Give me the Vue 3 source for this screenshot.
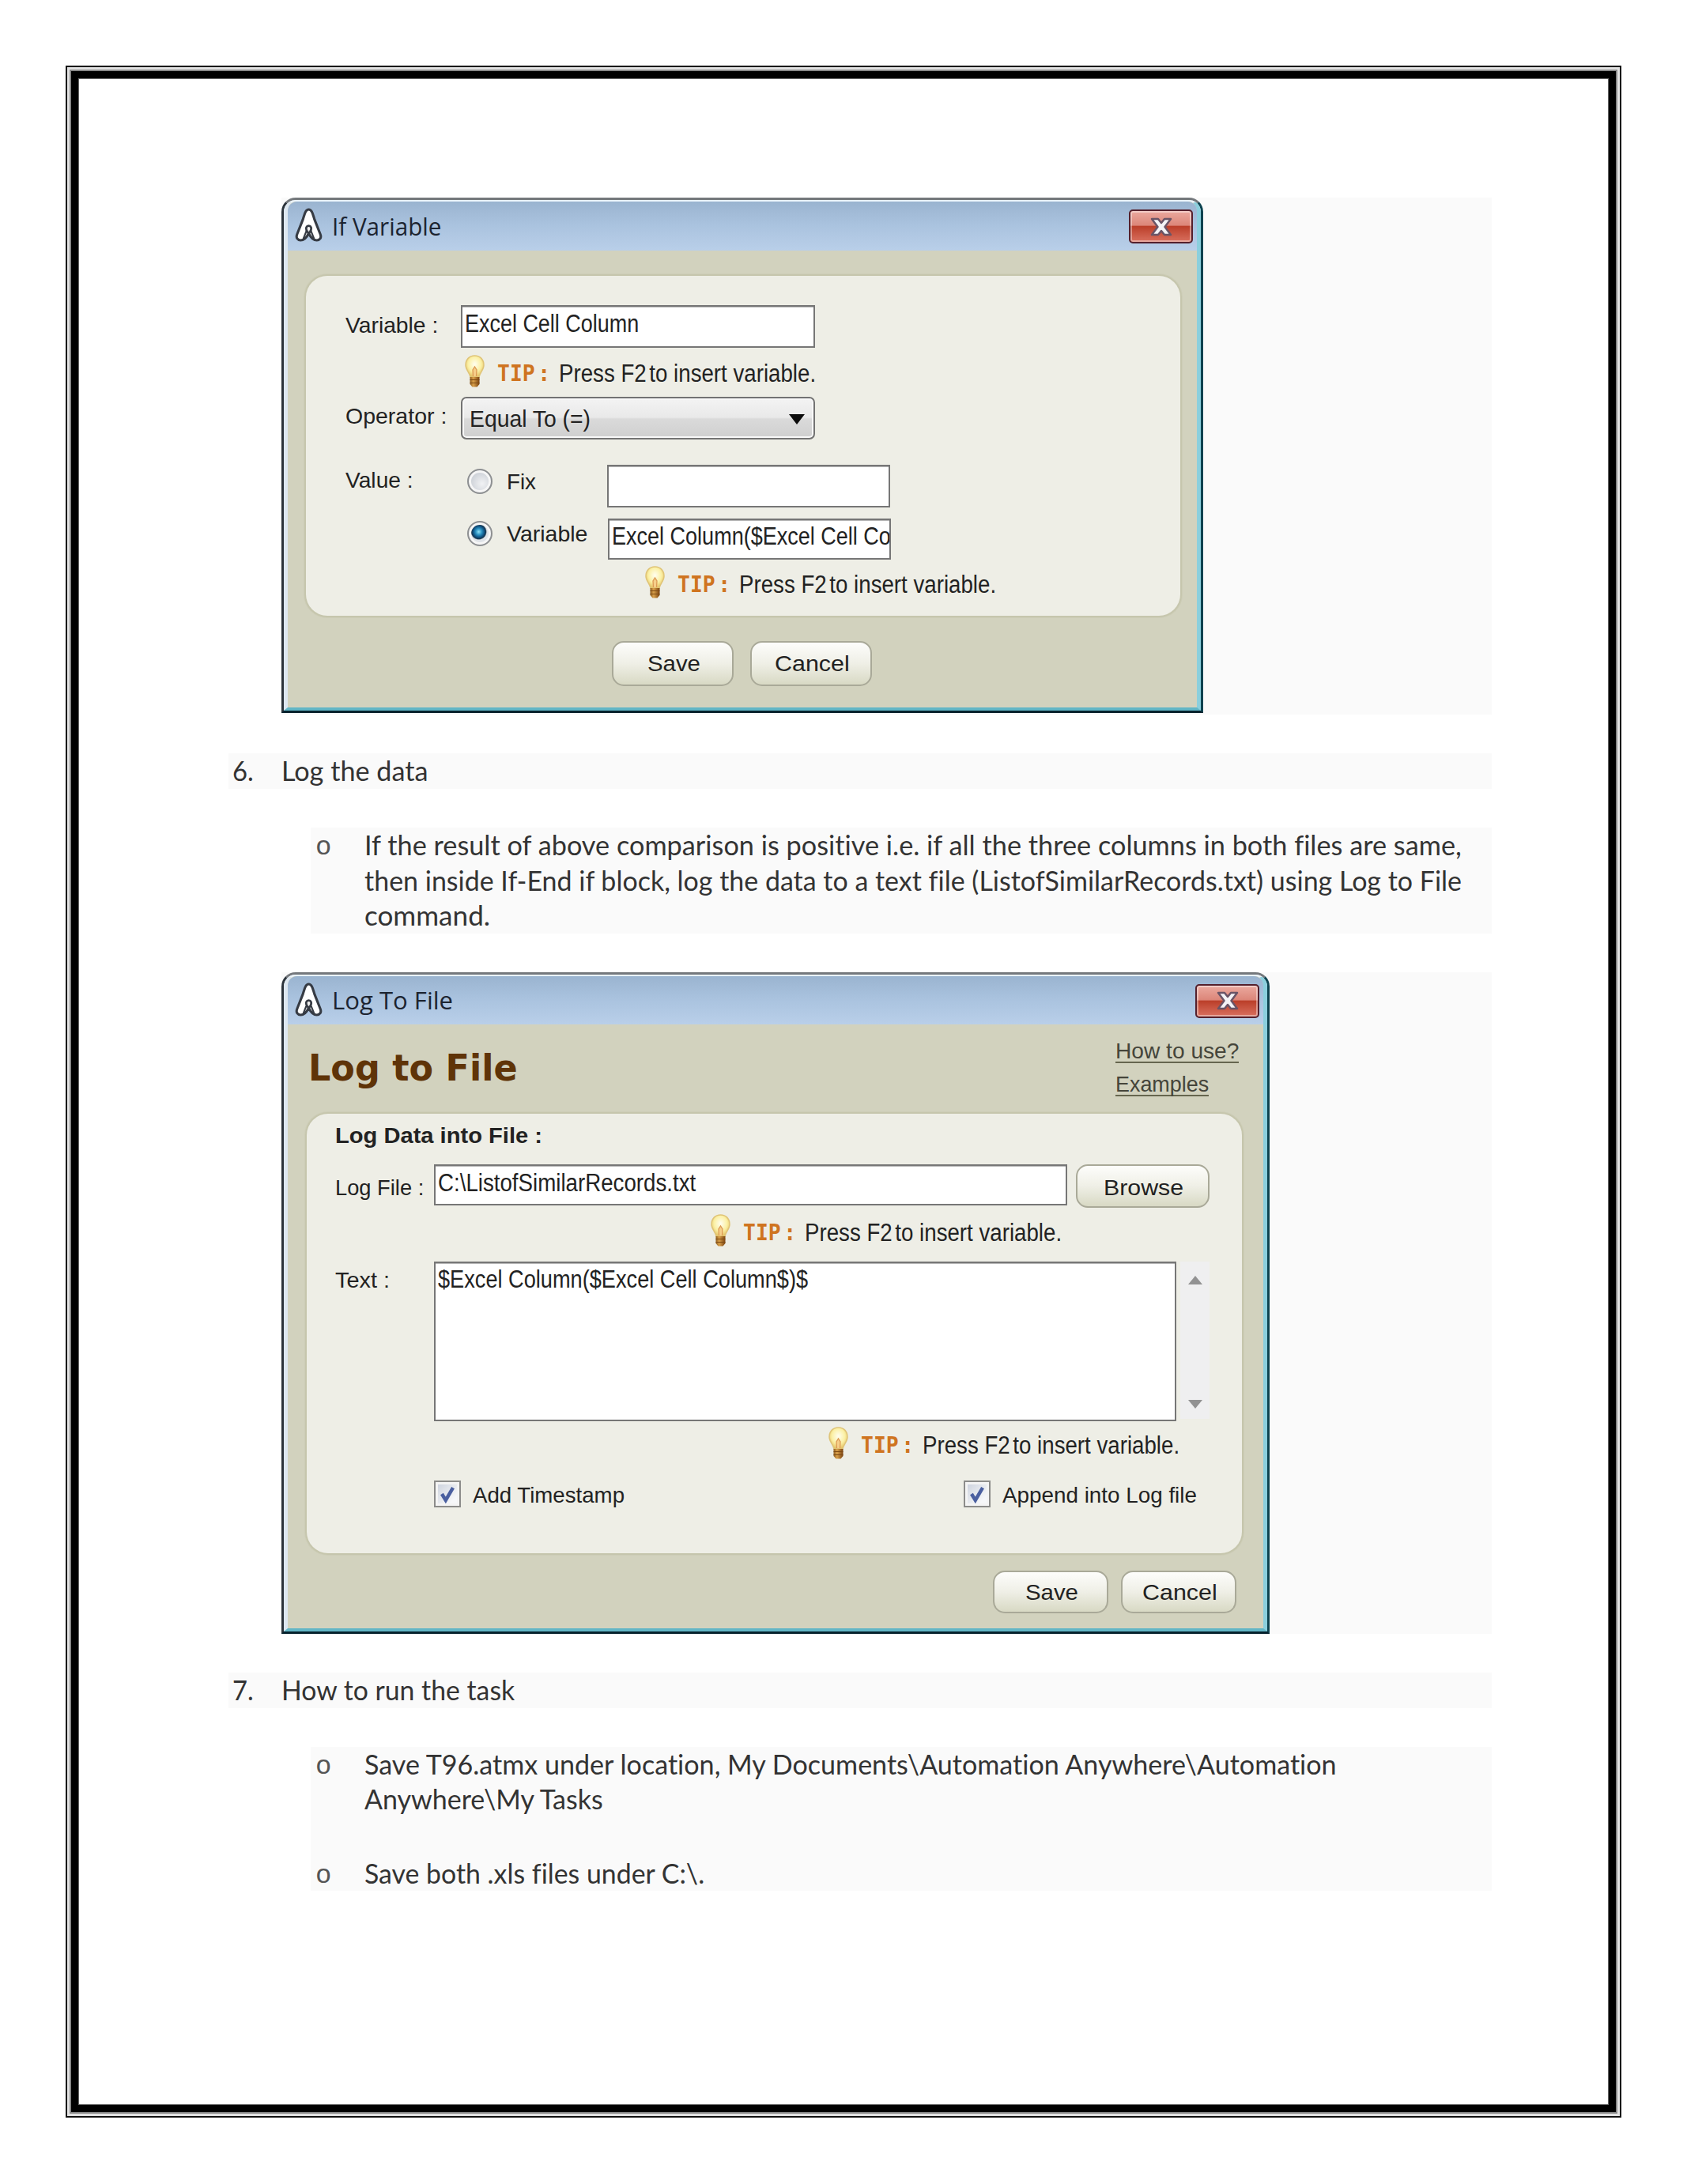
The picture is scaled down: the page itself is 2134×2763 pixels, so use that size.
<script setup>
// Condenses or widens a run of text to the given width in pixels.
const vFit = {
  mounted(el, { value }) {
    const natural = el.offsetWidth
    el.style.transform = `scaleX(${value / natural})`
    el.style.marginRight = `${value - natural}px`
  },
}
</script>

<template>
  <div class="page">
    <svg class="defs" width="0" height="0">
      <defs>
        <radialGradient id="glow" cx="50%" cy="40%" r="60%">
          <stop offset="0" stop-color="#fffef0" />
          <stop offset="0.6" stop-color="#fbf0a4" />
          <stop offset="1" stop-color="#e3bf62" />
        </radialGradient>
        <linearGradient id="base" x1="0" x2="1" y1="0" y2="0">
          <stop offset="0" stop-color="#8d5a1c" />
          <stop offset="0.35" stop-color="#d9a04a" />
          <stop offset="1" stop-color="#7a420e" />
        </linearGradient>
      </defs>
      <symbol id="bulb" viewBox="0 0 25 41">
        <path d="M12.5 1C5.5 1 1 6 1 13c0 6 5 9 6 15h11c1-6 6-9 6-15C24 6 19.500 1 12.500 1Z" fill="url(#glow)" stroke="#dfc477" stroke-width="1.500" />
        <path d="M10.500 27 10 19l2.500-4 2.500 4-.5 8" fill="#f6cf8a" stroke="#dc9a55" stroke-width="1.300" />
        <path d="M6.500 28h12v9l-3 3.500h-6l-3-3.500Z" fill="url(#base)" />
        <path d="M6.500 31.500h12M6.500 35.500h12" stroke="#7d4a14" stroke-width="1.200" />
      </symbol>
      <symbol id="logo" viewBox="0 0 34 44">
        <path d="M17 2C13 2 12 7 9.500 15L2 34c-2 5 1 8 4.500 8 5 0 8-4 10.500-9 2.500 5 5.500 9 10.500 9 3.500 0 6.500-3 4.500-8l-7.500-19C22 7 21 2 17 2Z" fill="#fff" stroke="#363b44" stroke-width="3.200" />
        <path d="M17 33c-3-3-4-5-3-8 1-2.500 5-2.500 6 0 1 3 0 5-3 8Z" fill="#eee" stroke="#363b44" stroke-width="2.800" />
        <path d="m14 30-4 10M20 30l4 10" stroke="#363b44" stroke-width="2.200" />
      </symbol>
      <symbol id="cross" viewBox="0 0 28 24">
        <path d="M2 2h8l4 5 4-5h8l-7.500 10L26 22h-8l-4-5-4 5H2l7.500-10Z" fill="#f3f3f6" stroke="#6a5466" stroke-width="2.500" stroke-linejoin="round" />
      </symbol>
      <symbol id="check" viewBox="0 0 34 34">
        <path d="m9 17 5.500 9L25 8" fill="none" stroke="#4a5fa0" stroke-width="5" />
      </symbol>
    </svg>

    <div class="frame">
      <main class="sheet">
        <section class="figure first">
          <div class="dialog small">
            <div class="chrome">
              <header class="titlebar">
                <svg class="logo"><use href="#logo" /></svg>
                <span v-fit="138" class="t title">If Variable</span>
                <button class="close"><svg width="28" height="24"><use href="#cross" /></svg></button>
              </header>
              <div class="panel panel-a">
                <div class="row ra">
                  <span v-fit="117" class="t label">Variable :</span>
                  <div class="field fa"><span v-fit="220" class="t value">Excel Cell Column</span></div>
                </div>
                <div class="row rb tip">
                  <svg class="bulb"><use href="#bulb" /></svg>
                  <span v-fit="67" class="t mark">TIP :</span>
                  <span v-fit="325" class="t hint">Press F2<i />to insert variable.</span>
                </div>
                <div class="row rc">
                  <span v-fit="128" class="t label">Operator :</span>
                  <div class="select">
                    <span v-fit="153" class="t">Equal To (=)</span>
                    <svg class="arrow" viewBox="0 0 20 13"><path d="M0 0h20L10 13Z" fill="#0c0c0c" /></svg>
                  </div>
                </div>
                <div class="row rd">
                  <span v-fit="86" class="t label">Value :</span>
                  <span class="radio" />
                  <span v-fit="37" class="t option">Fix</span>
                  <div class="field fd" />
                </div>
                <div class="row re">
                  <span class="radio on" />
                  <span v-fit="102" class="t option">Variable</span>
                  <div class="field fe"><span v-fit="353" class="t value">Excel Column($Excel Cell Co</span></div>
                </div>
                <div class="row rf tip">
                  <svg class="bulb"><use href="#bulb" /></svg>
                  <span v-fit="67" class="t mark">TIP :</span>
                  <span v-fit="325" class="t hint">Press F2<i />to insert variable.</span>
                </div>
              </div>
              <footer class="actions actions-a">
                <button class="btn"><span v-fit="67" class="t">Save</span></button>
                <button class="btn"><span v-fit="95" class="t">Cancel</span></button>
              </footer>
            </div>
          </div>
        </section>

        <div class="item">
          <span v-fit="27" class="t num">6.</span><span v-fit="185" class="t">Log the data</span>
        </div>
        <div class="sub">
          <span class="bullet">o</span>
          <div class="lines">
            <span v-fit="1388" class="t">If the result of above comparison is positive i.e. if all the three columns in both files are same,</span>
            <span v-fit="1388" class="t">then inside If-End if block, log the data to a text file (ListofSimilarRecords.txt) using Log to File</span>
            <span v-fit="159" class="t">command.</span>
          </div>
        </div>

        <section class="figure second">
          <div class="dialog large">
            <div class="chrome">
              <header class="titlebar low">
                <svg class="logo"><use href="#logo" /></svg>
                <span v-fit="153" class="t title">Log To File</span>
                <button class="close"><svg width="28" height="24"><use href="#cross" /></svg></button>
              </header>
              <div class="head">
                <h1 v-fit="265" class="t">Log to File</h1>
                <nav class="links">
                  <a v-fit="156" class="t">How to use?</a>
                  <a v-fit="118" class="t">Examples</a>
                </nav>
              </div>
              <div class="panel panel-b">
                <div class="row sa"><span v-fit="262" class="t label strong">Log Data into File :</span></div>
                <div class="row sb">
                  <span v-fit="112" class="t label">Log File :</span>
                  <div class="field gb"><span v-fit="326" class="t value">C:\ListofSimilarRecords.txt</span></div>
                  <button class="btn browse"><span v-fit="101" class="t">Browse</span></button>
                </div>
                <div class="row sc tip">
                  <svg class="bulb"><use href="#bulb" /></svg>
                  <span v-fit="67" class="t mark">TIP :</span>
                  <span v-fit="325" class="t hint">Press F2<i />to insert variable.</span>
                </div>
                <div class="row sd">
                  <span v-fit="69" class="t label">Text :</span>
                  <div class="field area"><span v-fit="468" class="t value">$Excel Column($Excel Cell Column$)$</span></div>
                  <div class="scroll">
                    <svg width="18" height="11" viewBox="0 0 18 11"><path d="M0 11 9 0l9 11Z" fill="#929292" /></svg>
                    <svg width="18" height="11" viewBox="0 0 18 11"><path d="M0 0h18L9 11Z" fill="#929292" /></svg>
                  </div>
                </div>
                <div class="row se tip">
                  <svg class="bulb"><use href="#bulb" /></svg>
                  <span v-fit="67" class="t mark">TIP :</span>
                  <span v-fit="325" class="t hint">Press F2<i />to insert variable.</span>
                </div>
                <div class="row sf">
                  <span class="box"><svg><use href="#check" /></svg></span>
                  <span v-fit="192" class="t">Add Timestamp</span>
                  <span class="box second-box"><svg><use href="#check" /></svg></span>
                  <span v-fit="246" class="t">Append into Log file</span>
                </div>
              </div>
              <footer class="actions actions-b">
                <button class="btn"><span v-fit="67" class="t">Save</span></button>
                <button class="btn"><span v-fit="95" class="t">Cancel</span></button>
              </footer>
            </div>
          </div>
        </section>

        <div class="item">
          <span v-fit="27" class="t num">7.</span><span v-fit="295" class="t">How to run the task</span>
        </div>
        <div class="subs">
          <div class="sub">
            <span class="bullet">o</span>
            <div class="lines">
              <span v-fit="1230" class="t">Save T96.atmx under location, My Documents\Automation Anywhere\Automation</span>
              <span v-fit="302" class="t">Anywhere\My Tasks</span>
            </div>
          </div>
          <div class="sub">
            <span class="bullet">o</span>
            <div class="lines"><span v-fit="430" class="t">Save both .xls files under C:\.</span></div>
          </div>
        </div>
      </main>
    </div>
  </div>
</template>

<style>
body {
  background: #fff;
}
</style>

<style scoped>
* {
  box-sizing: border-box;
}
.page {
  width: 2134px;
  height: 2763px;
  padding: 83px;
  background: #fff;
}
.defs {
  position: absolute;
}
.frame {
  width: 1968px;
  height: 2596px;
  border: 2px solid #111;
  padding: 5px;
  background: #e2e2e2;
}
.sheet {
  height: 100%;
  border: 9px solid #000;
  box-shadow: 0 0 0 2px #888, inset 0 0 0 1px #666;
  background: #fff;
  padding: 151px 0 0 190px;
}
.t {
  flex: none;
  align-self: flex-start;
  display: block;
  white-space: nowrap;
  transform-origin: 0 50%;
}
button {
  display: block;
  padding: 0;
  font: inherit;
  color: inherit;
}

/* document text */
.item,
.sub {
  display: flex;
  font: 34px/45px Lato, "Open Sans", sans-serif;
  font-variant-ligatures: none;
  color: #333;
}
.item {
  width: 1598px;
  height: 45px;
  padding-left: 5px;
  background: #fafafa;
  margin-top: 49px;
}
.item .num + .t {
  margin-left: 35px;
}
.item .t {
  margin-top: -1px;
}
.sub {
  width: 1494px;
  margin: 49px 0 0 104px;
  padding-left: 6px;
  background: #fafafa;
}
.lines {
  display: flex;
  flex-direction: column;
  line-height: 44.500px;
  margin-left: 42px;
}
.bullet {
  width: 20px;
  font-family: "Liberation Mono", monospace;
  font-size: 34px;
  line-height: 50px;
  height: 44px;
  color: #555;
}
.subs {
  width: 1494px;
  margin: 49px 0 0 104px;
  background: #fafafa;
}
.subs .sub {
  margin: 0;
}
.subs .sub + .sub {
  padding-top: 49px;
}

/* figures */
.figure {
  width: 1531px;
  margin-left: 67px;
  background: #fafafa;
}
.first {
  height: 654px;
}
.second {
  height: 837px;
  margin-top: 49px;
}
.dialog {
  border: 3px solid;
  border-color: #74787c #0d4350 #06222d #2b333b;
  border-radius: 18px 18px 0 0;
  font: 28.500px/30px "Liberation Sans", Arial, sans-serif;
  color: #222;
}
.small {
  width: 1166px;
  height: 652px;
}
.large {
  width: 1250px;
  height: 837px;
}
.chrome {
  height: 100%;
  border: solid;
  border-width: 2px 5px 4px;
  border-color: #eaf3fb #8bcfdd #62b6c6 #dde7f0;
  border-radius: 15px 15px 0 0;
  background: #d2d2be;
}
.titlebar {
  display: flex;
  height: 62px;
  padding: 8px 5px 0 9px;
  background: linear-gradient(#9ab4d0, #a9c2de 45%, #b9cfe9);
  border-radius: 12px 12px 0 0;
}
.logo {
  width: 35px;
  height: 43px;
}
.title {
  font: 30.500px/36px "Open Sans", "Noto Sans", sans-serif;
  margin: 5px 0 0 12px;
  color: #1c2430;
}
.low {
  height: 61px;
}
.low .title {
  margin-top: 4px;
}
.close {
  display: flex;
  align-items: center;
  justify-content: center;
  width: 81px;
  height: 43px;
  margin: 2px 0 0 auto;
  border: 2px solid #54202c;
  border-radius: 5px;
  background: linear-gradient(#eba99f, #dc8679 46%, #bb3f2a 50%, #d9705f);
  box-shadow: inset 0 0 0 2px #ffffff66;
}
.panel {
  background: #eeeee6;
  border-radius: 27px;
  box-shadow: 0 0 0 2px #c6c6ad, 0 0 0 3px #cdcdb7;
}
.panel-a {
  width: 1106px;
  height: 430px;
  margin: 32px 0 0 23px;
}
.panel-b {
  width: 1183px;
  height: 556px;
  margin-left: 24px;
}
.row {
  display: flex;
  align-items: flex-start;
}
.field {
  display: flex;
  overflow: hidden;
  background: #fff;
  border: 2px solid #767676;
  box-shadow: inset 0 1px 0 #b5b5b5;
}
.value,
.hint {
  font-size: 31px;
}
.value {
  margin: 7px 0 0 3px;
}
.bulb {
  width: 25px;
  height: 41px;
  margin: 4px 0 0 1px;
}
.mark {
  font: bold 28px/30px "DejaVu Sans Mono", monospace;
  word-spacing: -13px;
  color: #cf7420;
  margin: 13px 0 0 16px;
}
.hint {
  margin: 13px 0 0 11px;
}
.hint i {
  display: inline-block;
  width: 4px;
}
.ra {
  height: 96px;
}
.ra .label {
  margin: 47px 0 0 50px;
}
.fa {
  width: 448px;
  height: 54px;
  margin: 37px 0 0 29px;
}
.rb {
  height: 55px;
  padding-left: 200px;
}
.rc {
  height: 84px;
}
.rc .label {
  margin: 11px 0 0 50px;
}
.select {
  display: flex;
  width: 448px;
  height: 54px;
  margin: 2px 0 0 18px;
  padding: 11px 11px 0 9px;
  border: 2px solid #737373;
  border-radius: 7px;
  background: linear-gradient(#f3f3f3, #e9e9e9 48%, #dadada 52%, #cfcfcf);
  box-shadow: inset 0 0 0 2px #f8f8f8;
  font-size: 30px;
}
.arrow {
  width: 20px;
  height: 13px;
  margin: 9px 0 0 auto;
}
.rd {
  height: 68px;
}
.rd .label {
  margin: 8px 0 0 50px;
}
.radio {
  width: 32px;
  height: 32px;
  margin: 9px 0 0 68px;
  border: 2px solid #8e9092;
  border-radius: 50%;
  background: radial-gradient(circle at 60% 60%, #f1f2f4, #cfd3d9 60%);
  box-shadow: inset 0 0 0 3px #f6f6f6;
}
.radio.on {
  margin: 7px 0 0 204px;
  background: radial-gradient(circle at 45% 42%, #8fe0f5 0, #2a8fc0 18%, #0f5080 32%, #16364f 40%, #dfe3e8 46%);
}
.option {
  margin: 10px 0 0 18px;
}
.fd {
  width: 358px;
  height: 54px;
  margin: 4px 0 0 90px;
}
.re {
  height: 60px;
}
.fe {
  width: 358px;
  height: 52px;
  margin: 4px 0 0 26px;
}
.fe .value {
  margin-top: 6px;
}
.re .option {
  margin-top: 8px;
}
.rf {
  padding-left: 428px;
}
.actions {
  display: flex;
}
.actions-a {
  gap: 21px;
  margin: 32px 0 0 410px;
}
.btn {
  display: flex;
  justify-content: center;
  width: 154px;
  height: 57px;
  padding: 11px 0 0 2px;
  border: 2px solid #a9a998;
  border-radius: 15px;
  background: linear-gradient(#fdfdfb, #efefe6 50%, #d8d9c4);
}

/* log to file dialog */
.head {
  display: flex;
  justify-content: space-between;
  height: 113px;
}
h1 {
  margin: 27px 0 0 26px;
  font: bold 47px/56px "DejaVu Sans", Verdana, sans-serif;
  color: #5f3408;
}
.links {
  display: flex;
  flex-direction: column;
  width: 155px;
  margin: 18px 32px 0 0;
  gap: 11px;
  color: #45453a;
}
.links .t {
  height: 31px;
  border-bottom: 2px solid #66664f;
}
.sa {
  height: 60px;
}
.sa .label {
  margin: 13px 0 0 36px;
}
.strong {
  font-weight: bold;
  font-size: 28px;
}
.sb {
  height: 63px;
}
.sb .label {
  margin: 18px 0 0 36px;
}
.gb {
  width: 801px;
  height: 52px;
  margin: 4px 0 0 13px;
}
.browse {
  width: 169px;
  height: 55px;
  margin: 4px 0 0 11px;
  padding-top: 12px;
}
.sc {
  height: 62px;
  padding-left: 510px;
}
.sd {
  height: 207px;
}
.sd .label {
  margin: 10px 0 0 36px;
}
.area {
  width: 939px;
  height: 202px;
  margin: 2px 0 0 56px;
}
.area .value {
  margin-top: 6px;
}
.scroll {
  display: flex;
  flex-direction: column;
  align-items: center;
  justify-content: space-between;
  width: 37px;
  height: 199px;
  margin: 2px 0 0 5px;
  padding: 18px 0 13px;
  background: #efeff0;
}
.se {
  height: 69px;
  padding-left: 659px;
}
.sf .t {
  margin: 6px 0 0 15px;
}
.box {
  width: 34px;
  height: 34px;
  margin: 3px 0 0 161px;
  border: 2px solid #8c8c8a;
  background: linear-gradient(135deg, #c9cfdb, #f6f7f9 75%);
  box-shadow: inset 0 0 0 3px #f4f4f4;
}
.box svg {
  display: block;
  width: 30px;
  height: 30px;
}
.second-box {
  margin-left: 429px;
}
.actions-b {
  gap: 16px;
  margin: 22px 0 0 892px;
}
.actions-b .btn {
  width: 146px;
  height: 54px;
  padding-top: 10px;
}
</style>
